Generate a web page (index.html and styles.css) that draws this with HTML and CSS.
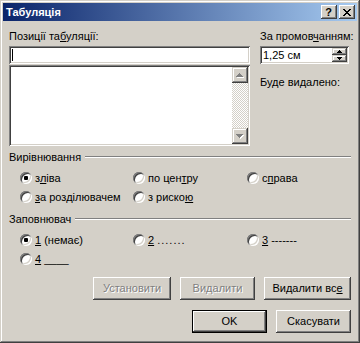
FILE: index.html
```html
<!DOCTYPE html>
<html lang="uk">
<head>
<meta charset="utf-8">
<title>Табуляція</title>
<link rel="stylesheet" href="styles.css">
</head>
<body>
<div class="window">
  <div class="titlebar">
    <span class="title">Табуляція</span>
    <div class="caption-btns">
      <span class="cbtn help">?</span>
      <span class="cbtn close">
        <svg width="8" height="7" viewBox="0 0 8 7"><path d="M0 0h2v1h-2zM6 0h2v1h-2zM1 1h2v1h-2zM5 1h2v1h-2zM2 2h4v1h-4zM3 3h2v1h-2zM2 4h4v1h-4zM1 5h2v1h-2zM5 5h2v1h-2zM0 6h2v1h-2zM6 6h2v1h-2z" fill="#000"/></svg>
      </span>
    </div>
  </div>
  <div class="client">
    <div class="top">
      <div class="col">
        <div class="label">Позиції та<u>б</u>уляції:</div>
        <div class="field"><span class="caret"></span></div>
        <div class="listbox">
          <div class="scrollbar">
            <div class="sbtn">
              <svg width="16" height="16" viewBox="0 0 16 16"><path d="M8 7h1v1h-1zM7 8h3v1h-3zM6 9h5v1h-5zM5 10h7v1h-7z" fill="#fff"/><path d="M7 6h1v1h-1zM6 7h3v1h-3zM5 8h5v1h-5zM4 9h7v1h-7z" fill="#808080"/></svg>
            </div>
            <div class="track"></div>
            <div class="sbtn">
              <svg width="16" height="16" viewBox="0 0 16 16"><path d="M5 7h7v1h-7zM6 8h5v1h-5zM7 9h3v1h-3zM8 10h1v1h-1z" fill="#fff"/><path d="M4 6h7v1h-7zM5 7h5v1h-5zM6 8h3v1h-3zM7 9h1v1h-1z" fill="#808080"/></svg>
            </div>
          </div>
        </div>
      </div>
      <div class="col">
        <div class="label">За промов<u>ч</u>анням:</div>
        <div class="field spin">
          <span class="val">1,25 см</span>
          <div class="spinbtns">
            <div class="spb"><svg width="15" height="7" viewBox="0 0 15 7"><path d="M7 2h1v1h-1zM6 3h3v1h-3zM5 4h5v1h-5z" fill="#000"/></svg></div>
            <div class="spb"><svg width="15" height="7" viewBox="0 0 15 7"><path d="M5 2h5v1h-5zM6 3h3v1h-3zM7 4h1v1h-1z" fill="#000"/></svg></div>
          </div>
        </div>
        <div class="label removed">Буде видалено:</div>
      </div>
    </div>

    <div class="group-head"><span>Вирівнювання</span><span class="etch"></span></div>
    <div class="options">
      <div class="opt"><span class="radio checked"></span><span>з<u>л</u>іва</span></div>
      <div class="opt"><span class="radio"></span><span>по цен<u>т</u>ру</span></div>
      <div class="opt"><span class="radio"></span><span>с<u>п</u>рава</span></div>
      <div class="opt"><span class="radio"></span><span><u>з</u>а розділювачем</span></div>
      <div class="opt"><span class="radio"></span><span>з риско<u>ю</u></span></div>
    </div>

    <div class="group-head"><span>Заповнювач</span><span class="etch"></span></div>
    <div class="options">
      <div class="opt"><span class="radio checked"></span><span><u>1</u> (немає)</span></div>
      <div class="opt"><span class="radio"></span><span><u>2</u> <span class="leader">.......</span></span></div>
      <div class="opt"><span class="radio"></span><span><u>3</u> -------</span></div>
      <div class="opt"><span class="radio"></span><span><u>4</u> ____</span></div>
    </div>

    <div class="btnrow first">
      <span class="btn disabled w78">Установити</span>
      <span class="btn disabled w75">Видалити</span>
      <span class="btn w87">Видалити вс<u>е</u></span>
    </div>
    <div class="btnrow second">
      <span class="btn default w75">OK</span>
      <span class="btn w75">Скасувати</span>
    </div>
  </div>
</div>
</body>
</html>
```

FILE: styles.css
```css
* {
  box-sizing: border-box;
}

html,
body {
  margin: 0;
  padding: 0;
}

body {
  width: 360px;
  height: 343px;
  overflow: hidden;
  background: #d4d0c8;
  color: #000;
  font-family: "Liberation Sans", Arial, sans-serif;
  font-size: 11px;
  line-height: 13px;
}

u {
  text-decoration: underline;
  text-underline-offset: 1px;
}

.window {
  width: 360px;
  height: 343px;
  padding: 3px;
  background: #d4d0c8;
  box-shadow: inset -1px -1px 0 #404040, inset 1px 1px 0 #d4d0c8,
    inset -2px -2px 0 #808080, inset 2px 2px 0 #ffffff;
}

/* title bar */
.titlebar {
  height: 18px;
  display: flex;
  align-items: center;
  justify-content: space-between;
  padding: 0 2px 0 3px;
  background: linear-gradient(90deg, #0a246a 0%, #a6caf0 100%);
}

.title {
  color: #fff;
  font-weight: bold;
  font-size: 11px;
}

.caption-btns {
  display: flex;
  gap: 2px;
}

.cbtn {
  width: 16px;
  height: 14px;
  display: flex;
  align-items: center;
  justify-content: center;
  background: #d4d0c8;
  box-shadow: inset -1px -1px 0 #404040, inset 1px 1px 0 #ffffff,
    inset -2px -2px 0 #808080, inset 2px 2px 0 #d4d0c8;
}

.cbtn.help {
  font-weight: bold;
  font-size: 11px;
  line-height: 14px;
  padding-right: 1px;
}

.cbtn.close svg {
  display: block;
  margin-left: -1px;
}

/* client */
.client {
  padding: 9px 6px 0 6px;
}

.top {
  display: grid;
  grid-template-columns: 241px 89px;
  column-gap: 10px;
}

.col {
  display: flex;
  flex-direction: column;
}

.label {
  height: 13px;
  white-space: nowrap;
}

.label.removed {
  margin-top: 12px;
}

.field {
  margin-top: 3px;
  height: 18px;
  padding: 2px;
  background: #fff;
  box-shadow: inset 1px 1px 0 #808080, inset -1px -1px 0 #ffffff,
    inset 2px 2px 0 #404040, inset -2px -2px 0 #d4d0c8;
  display: flex;
  align-items: center;
}

.caret {
  display: block;
  width: 1px;
  height: 12px;
  margin-left: 1px;
  background: #000;
}

.listbox {
  margin-top: 1px;
  height: 81px;
  padding: 2px;
  display: flex;
  justify-content: flex-end;
  background: #fff;
  box-shadow: inset 1px 1px 0 #808080, inset -1px -1px 0 #ffffff,
    inset 2px 2px 0 #404040, inset -2px -2px 0 #d4d0c8;
}

.scrollbar {
  width: 16px;
  display: flex;
  flex-direction: column;
}

.track {
  flex: 1;
  background: repeating-conic-gradient(#d4d0c8 0 25%, #ffffff 0 50%) 0 0 / 2px 2px;
}

.sbtn,
.spb {
  background: #d4d0c8;
  box-shadow: inset -1px -1px 0 #404040, inset 1px 1px 0 #d4d0c8,
    inset -2px -2px 0 #808080, inset 2px 2px 0 #ffffff;
}

.sbtn {
  height: 16px;
}

.sbtn svg,
.spb svg {
  display: block;
}

.spin .val {
  flex: 1;
  padding-left: 1px;
  white-space: nowrap;
}

.spinbtns {
  width: 15px;
  height: 14px;
  display: flex;
  flex-direction: column;
}

.spb {
  height: 7px;
}

/* groups */
.group-head {
  display: flex;
  height: 13px;
  margin-top: 5px;
  white-space: nowrap;
}

.group-head + .options {
  padding-top: 5px;
}

.options + .group-head {
  margin-top: 6px;
}

.etch {
  flex: 1;
  height: 2px;
  margin: 5px 0 0 4px;
  border-top: 1px solid #808080;
  border-bottom: 1px solid #ffffff;
}

.options {
  display: grid;
  grid-template-columns: 113px 114px 1fr;
  grid-auto-rows: 19px;
  padding-left: 11px;
}

.opt {
  display: flex;
  align-items: flex-start;
  gap: 3px;
  padding-top: 3px;
  white-space: nowrap;
}

.leader {
  letter-spacing: 1px;
}

.radio {
  position: relative;
  flex: none;
  width: 12px;
  height: 12px;
  border-radius: 50%;
  background: #fff;
  box-shadow: inset 1px 1px 0 #808080, inset -1px -1px 0 #ffffff,
    inset 2px 2px 0 #404040, inset -2px -2px 0 #d4d0c8;
}

.radio.checked::after {
  content: "";
  position: absolute;
  left: 4px;
  top: 4px;
  width: 4px;
  height: 4px;
  border-radius: 1px;
  background: #000;
}

/* buttons */
.btnrow {
  display: flex;
  justify-content: flex-end;
  gap: 9px;
}

.btnrow.first {
  margin-top: 8px;
}

.btnrow.second {
  margin-top: 10px;
}

.btn {
  height: 23px;
  display: flex;
  align-items: center;
  justify-content: center;
  background: #d4d0c8;
  white-space: nowrap;
  box-shadow: inset -1px -1px 0 #404040, inset 1px 1px 0 #ffffff,
    inset -2px -2px 0 #808080, inset 2px 2px 0 #d4d0c8;
}

.btn.default {
  box-shadow: inset 0 0 0 1px #000000, inset -2px -2px 0 #404040,
    inset 2px 2px 0 #ffffff, inset -3px -3px 0 #808080;
}

.btn.disabled {
  color: #808080;
  text-shadow: 1px 1px 0 #ffffff;
}

.w75 {
  width: 75px;
}

.w78 {
  width: 78px;
}

.w87 {
  width: 87px;
}
```
